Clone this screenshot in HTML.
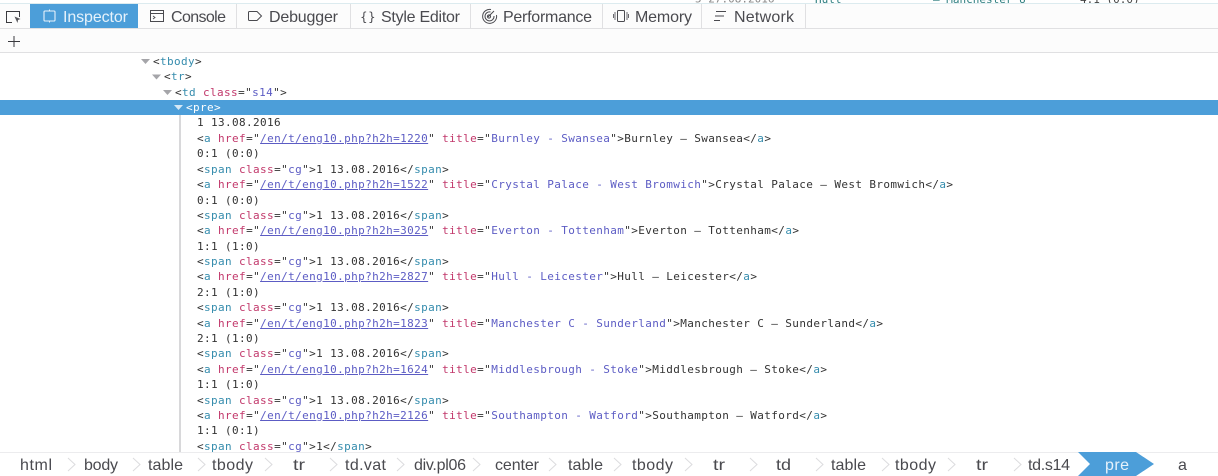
<!DOCTYPE html>
<html><head><meta charset="utf-8"><style>
html,body{margin:0;padding:0;background:#fff}
#p{position:relative;width:1218px;height:476px;overflow:hidden;background:#fff}
svg{position:absolute;left:0;top:0}
#sel{position:absolute;left:0;top:100px;width:1218px;height:15px;background:#4c9ed9}
.u{font-family:"Liberation Sans",sans-serif;font-size:16px;fill:#4a4a4f}
pre{position:absolute;margin:0;left:142px;top:54px;font:11px/15px "DejaVu Sans Mono",monospace;letter-spacing:.38px;color:#333;white-space:pre}
pre div{height:15px}
pre div:nth-child(2),pre div:nth-child(5),pre div:nth-child(7),pre div:nth-child(9),pre div:nth-child(12),pre div:nth-child(15),pre div:nth-child(17),pre div:nth-child(20),pre div:nth-child(22),pre div:nth-child(25){height:16px}
b{font-weight:normal;color:#358cad}i{font-style:normal;color:#c2386b}u{color:#5c5cc4;text-decoration:none}u.l{text-decoration:underline}
.a0{padding-left:11px}.a1{padding-left:22px}.a2{padding-left:33px}.a3{padding-left:44px;color:#fff}.c{padding-left:55px}
.a3 b{color:#fff}
</style></head><body><div id="p">
<div id="sel"></div>
<pre><div class="a0">&lt;<b>tbody</b>&gt;</div><div class="a1">&lt;<b>tr</b>&gt;</div><div class="a2">&lt;<b>td</b> <i>class</i>="<u>s14</u>"&gt;</div><div class="a3">&lt;<b>pre</b>&gt;</div><div class="c">1 13.08.2016</div><div class="c">&lt;<b>a</b> <i>href</i>="<u class="l">/en/t/eng10.php?h2h=1220</u>" <i>title</i>="<u>Burnley - Swansea</u>"&gt;Burnley – Swansea&lt;/<b>a</b>&gt;</div><div class="c">0:1 (0:0)</div><div class="c">&lt;<b>span</b> <i>class</i>="<u>cg</u>"&gt;1 13.08.2016&lt;/<b>span</b>&gt;</div><div class="c">&lt;<b>a</b> <i>href</i>="<u class="l">/en/t/eng10.php?h2h=1522</u>" <i>title</i>="<u>Crystal Palace - West Bromwich</u>"&gt;Crystal Palace – West Bromwich&lt;/<b>a</b>&gt;</div><div class="c">0:1 (0:0)</div><div class="c">&lt;<b>span</b> <i>class</i>="<u>cg</u>"&gt;1 13.08.2016&lt;/<b>span</b>&gt;</div><div class="c">&lt;<b>a</b> <i>href</i>="<u class="l">/en/t/eng10.php?h2h=3025</u>" <i>title</i>="<u>Everton - Tottenham</u>"&gt;Everton – Tottenham&lt;/<b>a</b>&gt;</div><div class="c">1:1 (1:0)</div><div class="c">&lt;<b>span</b> <i>class</i>="<u>cg</u>"&gt;1 13.08.2016&lt;/<b>span</b>&gt;</div><div class="c">&lt;<b>a</b> <i>href</i>="<u class="l">/en/t/eng10.php?h2h=2827</u>" <i>title</i>="<u>Hull - Leicester</u>"&gt;Hull – Leicester&lt;/<b>a</b>&gt;</div><div class="c">2:1 (1:0)</div><div class="c">&lt;<b>span</b> <i>class</i>="<u>cg</u>"&gt;1 13.08.2016&lt;/<b>span</b>&gt;</div><div class="c">&lt;<b>a</b> <i>href</i>="<u class="l">/en/t/eng10.php?h2h=1823</u>" <i>title</i>="<u>Manchester C - Sunderland</u>"&gt;Manchester C – Sunderland&lt;/<b>a</b>&gt;</div><div class="c">2:1 (1:0)</div><div class="c">&lt;<b>span</b> <i>class</i>="<u>cg</u>"&gt;1 13.08.2016&lt;/<b>span</b>&gt;</div><div class="c">&lt;<b>a</b> <i>href</i>="<u class="l">/en/t/eng10.php?h2h=1624</u>" <i>title</i>="<u>Middlesbrough - Stoke</u>"&gt;Middlesbrough – Stoke&lt;/<b>a</b>&gt;</div><div class="c">1:1 (1:0)</div><div class="c">&lt;<b>span</b> <i>class</i>="<u>cg</u>"&gt;1 13.08.2016&lt;/<b>span</b>&gt;</div><div class="c">&lt;<b>a</b> <i>href</i>="<u class="l">/en/t/eng10.php?h2h=2126</u>" <i>title</i>="<u>Southampton - Watford</u>"&gt;Southampton – Watford&lt;/<b>a</b>&gt;</div><div class="c">1:1 (0:1)</div><div class="c">&lt;<b>span</b> <i>class</i>="<u>cg</u>"&gt;1&lt;/<b>span</b>&gt;</div></pre>
<svg width="1218" height="476" viewBox="0 0 1218 476" style="pointer-events:none">
<g font-family="DejaVu Sans Mono" font-size="11" fill="#444"><text x="695" y="2.5" fill="#888">5 27.08.2016</text><text x="815" y="3" fill="#2f7f80">Hull</text><text x="933" y="3" fill="#2f7f80">– Manchester U</text><text x="1080" y="3">4:1 (0:0)</text></g>
<rect x="0" y="3" width="1218" height="49" fill="#fcfcfc"/>
<rect x="0" y="3" width="1218" height="1" fill="#dcebef"/>
<rect x="0" y="28" width="1218" height="1" fill="#e0e0e2"/>
<rect x="0" y="52" width="1218" height="1" fill="#e0e0e2"/>
<rect x="30" y="4" width="108" height="24" fill="#4c9ed9"/>
<g fill="#e0e0e2"><rect x="236" y="4" width="1" height="24"/><rect x="350" y="4" width="1" height="24"/><rect x="470" y="4" width="1" height="24"/><rect x="602" y="4" width="1" height="24"/><rect x="701" y="4" width="1" height="24"/><rect x="805" y="4" width="1" height="24"/></g>

<!-- pick -->
<path d="M12 22.5H6.5V11.5H19.5V17" fill="none" stroke="#3a3a3f" stroke-width="1"/><path d="M14.500 16.500L20.500 19L18 20L17.500 23Z" fill="#55555a"/>
<!-- inspector -->
<rect x="44" y="11" width="11" height="10" rx="1" fill="none" stroke="#e8f3fb" stroke-width="1.1"/><path d="M49.500 9.500V11M49.500 21V22.500" stroke="#e8f3fb"/>
<!-- console -->
<rect x="150.500" y="10.500" width="13" height="11" fill="none" stroke="#4a4a4f"/><path d="M150.500 13.500H163.500M153 16l2 1.500-2 1.500" fill="none" stroke="#4a4a4f" stroke-width=".9"/>
<!-- debugger -->
<path d="M249.500 11.500H257L261.500 16L257 20.500H249.500Q248.500 20.500 248.500 19.500V12.500Q248.500 11.500 249.500 11.500Z" fill="none" stroke="#4a4a4f"/>
<!-- style -->
<g font-family="DejaVu Sans" font-size="12" fill="#4a4a4f"><text x="360" y="21">{</text><text x="368" y="21">}</text></g>
<!-- perf -->
<g fill="none" stroke="#4a4a4f" stroke-width="1"><path d="M491 9.500A7 7 0 1 0 496.500 15"/><path d="M490.500 12A4.500 4.500 0 1 0 494 16"/><path d="M488 17L494 11"/><circle cx="489" cy="16.500" r="1.600"/></g>
<!-- memory -->
<rect x="617.500" y="10.500" width="7" height="11" rx="1" fill="none" stroke="#4a4a4f"/><path d="M615 12v8M613.500 14v4M627 12v8M628.500 14v4" stroke="#6a6a6f" stroke-width="1" fill="none"/>
<!-- network -->
<path d="M716 11.500H726M715 16H724M714 20.500H720" stroke="#4a4a4f" fill="none"/>

<g class="u"><text x="63" y="22" style="fill:#e6f2fb" textLength="65">Inspector</text><text x="171" y="22" textLength="55">Console</text><text x="269" y="22" textLength="69">Debugger</text><text x="381" y="22" textLength="79">Style Editor</text><text x="503" y="22" textLength="89">Performance</text><text x="635" y="22" textLength="57">Memory</text><text x="734" y="22" textLength="60">Network</text></g>
<path d="M14 36V47M8 41.500H20" stroke="#3a3a3f" fill="none"/>

<rect x="179" y="115" width="2" height="337" fill="#d8d8da"/>
<g fill="#a5a5a9"><path d="M141 59H150L145.500 64Z"/><path d="M152 74.500H161L156.500 79.500Z"/><path d="M163 90H172L167.500 95Z"/></g><path d="M174 105H183L178.500 110Z" fill="#d5e8f6"/>

<rect x="0" y="452" width="1218" height="24" fill="#fff"/><rect x="0" y="452" width="1218" height="1" fill="#ececee"/>
<path d="M1078 452H1136L1154 464L1136 476H1078L1090 464Z" fill="#4c9ed9"/>
<g fill="none" stroke="#dcdcde"><path d="M68 458L75 464.500L68 471M133 458L140 464.500L133 471M198 458L205 464.500L198 471M265 458L272 464.500L265 471M330 458L337 464.500L330 471M397 458L404 464.500L397 471M473 458L480 464.500L473 471M549 458L556 464.500L549 471M614 458L621 464.500L614 471M685 458L692 464.500L685 471M750 458L757 464.500L750 471M816 458L823 464.500L816 471M882 458L889 464.500L882 471M948 458L955 464.500L948 471M1014 458L1021 464.500L1014 471"/></g>
<g class="u"><text x="20" y="470" textLength="32">html</text><text x="84" y="470" textLength="34">body</text><text x="148" y="470" textLength="35">table</text><text x="212" y="470" textLength="41">tbody</text><text x="293" y="470" textLength="12" lengthAdjust="spacingAndGlyphs">tr</text><text x="345" y="470" textLength="41">td.vat</text><text x="414" y="470" textLength="52">div.pl06</text><text x="495" y="470" textLength="44">center</text><text x="568" y="470" textLength="35">table</text><text x="632" y="470" textLength="41">tbody</text><text x="713" y="470" textLength="12" lengthAdjust="spacingAndGlyphs">tr</text><text x="776" y="470" textLength="15" lengthAdjust="spacingAndGlyphs">td</text><text x="831" y="470" textLength="35">table</text><text x="895" y="470" textLength="41">tbody</text><text x="976" y="470" textLength="12" lengthAdjust="spacingAndGlyphs">tr</text><text x="1028" y="470" textLength="42">td.s14</text><text x="1105" y="470" textLength="24" style="fill:#e6f2fb">pre</text><text x="1178" y="470" textLength="8">a</text></g>
</svg>
</div></body></html>
